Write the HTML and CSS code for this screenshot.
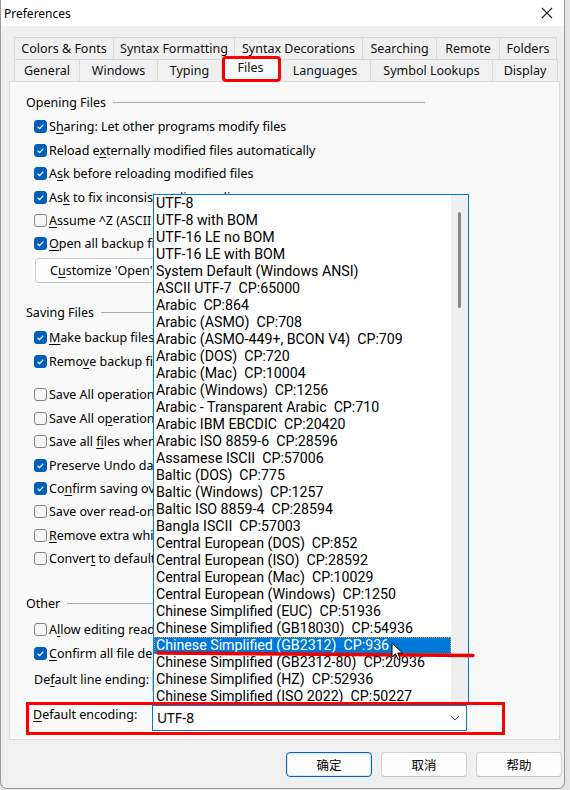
FILE: index.html
```html
<!DOCTYPE html>
<html>
<head>
<meta charset="utf-8">
<title>Preferences</title>
<link rel="stylesheet" href="styles.css">
</head>
<body>
<div class="window">
  <div class="titlebar">
    <span class="title">Preferences</span>
    <svg class="close" width="12" height="12" viewBox="0 0 12 12"><path d="M1 1 L11 11 M11 1 L1 11" stroke="#222" stroke-width="1.1" fill="none"/></svg>
  </div>

  <div class="tabs">
    <div class="tabrow">
      <div class="tab w100">Colors &amp; Fonts</div>
      <div class="tab w121">Syntax Formatting</div>
      <div class="tab w128">Syntax Decorations</div>
      <div class="tab w74">Searching</div>
      <div class="tab w63">Remote</div>
      <div class="tab w57">Folders</div>
    </div>
    <div class="tabrow">
      <div class="tab w65">General</div>
      <div class="tab w78">Windows</div>
      <div class="tab w64">Typing</div>
      <div class="tab w58 active">Files</div>
      <div class="tab w91">Languages</div>
      <div class="tab w122">Symbol Lookups</div>
      <div class="tab w65">Display</div>
    </div>
  </div>

  <div class="panel">
    <div class="group-head"><span>Opening Files</span><span class="rule"></span></div>
    <div class="row"><span class="cb on"><svg viewBox="0 0 13 13"><path d="M3.2 6.8 L5.4 9 L9.8 4.4"/></svg></span><span class="lbl">S<u>h</u>aring: Let other programs modify files</span></div>
    <div class="row"><span class="cb on"><svg viewBox="0 0 13 13"><path d="M3.2 6.8 L5.4 9 L9.8 4.4"/></svg></span><span class="lbl">Reload e<u>x</u>ternally modified files automatically</span></div>
    <div class="row"><span class="cb on"><svg viewBox="0 0 13 13"><path d="M3.2 6.8 L5.4 9 L9.8 4.4"/></svg></span><span class="lbl">A<u>s</u>k before reloading modified files</span></div>
    <div class="row"><span class="cb on"><svg viewBox="0 0 13 13"><path d="M3.2 6.8 L5.4 9 L9.8 4.4"/></svg></span><span class="lbl">As<u>k</u> to fix inconsistent line endings</span></div>
    <div class="row"><span class="cb"></span><span class="lbl"><u>A</u>ssume ^Z (ASCII 26) marks end of file</span></div>
    <div class="row"><span class="cb on"><svg viewBox="0 0 13 13"><path d="M3.2 6.8 L5.4 9 L9.8 4.4"/></svg></span><span class="lbl"><u>O</u>pen all backup files read-only</span></div>
    <div class="btn customize">C<u>u</u>stomize 'Open' dialog...</div>

    <div class="group-head saving"><span>Saving Files</span><span class="rule"></span></div>
    <div class="row"><span class="cb on"><svg viewBox="0 0 13 13"><path d="M3.2 6.8 L5.4 9 L9.8 4.4"/></svg></span><span class="lbl"><u>M</u>ake backup files when saving</span></div>
    <div class="row"><span class="cb on"><svg viewBox="0 0 13 13"><path d="M3.2 6.8 L5.4 9 L9.8 4.4"/></svg></span><span class="lbl">Remo<u>v</u>e backup files on exit</span></div>
    <div class="row gap"><span class="cb"></span><span class="lbl">Save All operation saves new files</span></div>
    <div class="row"><span class="cb"></span><span class="lbl">Save All o<u>p</u>eration saves unchanged files</span></div>
    <div class="row"><span class="cb"></span><span class="lbl">Save all <u>f</u>iles when switching apps</span></div>
    <div class="row"><span class="cb on"><svg viewBox="0 0 13 13"><path d="M3.2 6.8 L5.4 9 L9.8 4.4"/></svg></span><span class="lbl">Preserve Undo data after saving</span></div>
    <div class="row"><span class="cb on"><svg viewBox="0 0 13 13"><path d="M3.2 6.8 L5.4 9 L9.8 4.4"/></svg></span><span class="lbl">Co<u>n</u>firm saving over newer file</span></div>
    <div class="row"><span class="cb"></span><span class="lbl">Save over read-only files</span></div>
    <div class="row"><span class="cb"></span><span class="lbl"><u>R</u>emove extra whitespace</span></div>
    <div class="row"><span class="cb"></span><span class="lbl">Conver<u>t</u> to default line ending</span></div>

    <div class="group-head other"><span>Other</span><span class="rule"></span></div>
    <div class="row"><span class="cb"></span><span class="lbl">A<u>l</u>low editing read-only files</span></div>
    <div class="row"><span class="cb on"><svg viewBox="0 0 13 13"><path d="M3.2 6.8 L5.4 9 L9.8 4.4"/></svg></span><span class="lbl"><u>C</u>onfirm all file deletions</span></div>
    <div class="field line-ending"><span class="flabel">De<u>f</u>ault line ending:</span><div class="combo"></div></div>
    <div class="field encoding"><span class="flabel"><u>D</u>efault encoding:</span><div class="combo focus"><span>UTF-8</span><svg class="chev" width="10" height="6" viewBox="0 0 10 6"><path d="M1 1 L5 5 L9 1" stroke="#555" stroke-width="1" fill="none"/></svg></div></div>
  </div>

  <div class="buttons">
    <div class="btn dlg default">确定</div>
    <div class="btn dlg">取消</div>
    <div class="btn dlg">帮助</div>
  </div>

  <div class="dropdown">
    <div class="list">
      <div class="item">UTF-8</div>
      <div class="item">UTF-8 with BOM</div>
      <div class="item">UTF-16 LE no BOM</div>
      <div class="item">UTF-16 LE with BOM</div>
      <div class="item">System Default (Windows ANSI)</div>
      <div class="item">ASCII UTF-7  CP:65000</div>
      <div class="item">Arabic  CP:864</div>
      <div class="item">Arabic (ASMO)  CP:708</div>
      <div class="item">Arabic (ASMO-449+, BCON V4)  CP:709</div>
      <div class="item">Arabic (DOS)  CP:720</div>
      <div class="item">Arabic (Mac)  CP:10004</div>
      <div class="item">Arabic (Windows)  CP:1256</div>
      <div class="item">Arabic - Transparent Arabic  CP:710</div>
      <div class="item">Arabic IBM EBCDIC  CP:20420</div>
      <div class="item">Arabic ISO 8859-6  CP:28596</div>
      <div class="item">Assamese ISCII  CP:57006</div>
      <div class="item">Baltic (DOS)  CP:775</div>
      <div class="item">Baltic (Windows)  CP:1257</div>
      <div class="item">Baltic ISO 8859-4  CP:28594</div>
      <div class="item">Bangla ISCII  CP:57003</div>
      <div class="item">Central European (DOS)  CP:852</div>
      <div class="item">Central European (ISO)  CP:28592</div>
      <div class="item">Central European (Mac)  CP:10029</div>
      <div class="item">Central European (Windows)  CP:1250</div>
      <div class="item">Chinese Simplified (EUC)  CP:51936</div>
      <div class="item">Chinese Simplified (GB18030)  CP:54936</div>
      <div class="item sel">Chinese Simplified (GB2312)  CP:936</div>
      <div class="item">Chinese Simplified (GB2312-80)  CP:20936</div>
      <div class="item">Chinese Simplified (HZ)  CP:52936</div>
      <div class="item">Chinese Simplified (ISO 2022)  CP:50227</div>
    </div>
    <div class="scrollbar"><div class="thumb"></div></div>
  </div>

  <div class="mark mark-tab"></div>
  <div class="mark mark-enc"></div>
  <svg class="underline" width="330" height="12" viewBox="0 0 330 12"><path d="M2 4 L317 6.5" stroke="#ee0000" stroke-width="3.4" stroke-linecap="round" fill="none"/></svg>
  <svg class="cursor" width="14" height="20" viewBox="0 0 14 20"><path d="M1 1 L1 15 L4.5 11.8 L7 17.5 L9.2 16.5 L6.8 11 L11.5 11 Z" fill="#fff" stroke="#000" stroke-width="1" stroke-linejoin="round"/></svg>
</div>
</body>
</html>
```

FILE: styles.css
```css
* { box-sizing: border-box; }
html, body { margin: 0; padding: 0; }
body {
  width: 570px;
  height: 790px;
  background: #e4e4e4;
  font-family: "Noto Sans", "Noto Sans CJK SC", sans-serif;
  font-size: 12px;
  color: #000;
  overflow: hidden;
}
.window {
  position: relative;
  width: 565px;
  height: 789px;
  background: #f0f0f0;
  border: 1px solid #9a9a9a;
  border-top: none;
  border-radius: 0 0 7px 7px;
  display: flex;
  flex-direction: column;
}
.titlebar {
  height: 26px;
  background: #fff;
  display: flex;
  align-items: center;
  justify-content: space-between;
  padding: 0 11px 0 3px;
}
.title { font-size: 12px; }
.close { display: block; }

.tabs {
  margin: 11px 0 0 13px;
  display: flex;
  flex-direction: column;
}
.tabrow { display: flex; height: 22px; }
.tab {
  height: 22px;
  border: 1px solid #d9d9d9;
  border-bottom: none;
  margin-left: -1px;
  background: #f0f0f0;
  display: flex;
  align-items: center;
  justify-content: center;
  font-size: 12.5px;
  color: #111;
  padding-bottom: 1px;
}
.tabrow .tab:first-child { margin-left: 0; }
.tab.active {
  background: #f9f9f9;
  height: 25px;
  margin-top: -3px;
  position: relative;
  z-index: 2;
  padding-bottom: 4px;
}
.w57 { width: 58px; } .w58 { width: 59px; } .w63 { width: 64px; } .w64 { width: 65px; }
.w65 { width: 66px; } .w74 { width: 75px; } .w78 { width: 79px; } .w91 { width: 92px; }
.w100 { width: 100px; } .w121 { width: 122px; } .w122 { width: 123px; } .w128 { width: 129px; }

.panel {
  margin-left: 8px;
  width: 551px;
  height: 659px;
  background: #f9f9f9;
  border: 1px solid #dcdcdc;
  padding: 12px 0 0 16px;
  display: flex;
  flex-direction: column;
  overflow: hidden;
}
.group-head {
  display: flex;
  align-items: center;
  height: 16px;
  width: 399px;
  margin-bottom: 5.3px;
  font-size: 12.5px;
}
.group-head .rule {
  flex: 1;
  height: 1px;
  background: #a8a8a8;
  margin-left: 7px;
}
.group-head.saving { margin-top: 22px; }
.group-head.other { margin-top: 25.5px; margin-bottom: 6.3px; }
.row {
  height: 23.4px;
  display: flex;
  align-items: center;
  padding-left: 8px;
  white-space: nowrap;
  font-size: 12.5px;
}
.row.gap { margin-top: 10.2px; }
.cb {
  width: 13px;
  height: 13px;
  border: 1px solid #858585;
  border-radius: 3px;
  background: #f6f6f6;
  margin-right: 2px;
  flex: none;
  display: flex;
}
.cb.on {
  background: #005fb8;
  border-color: #005fb8;
}
.cb svg { width: 11px; height: 11px; }
.cb svg path { stroke: #fff; stroke-width: 1.3; fill: none; }
.lbl u, .flabel u, .btn u { text-decoration-thickness: 1px; text-underline-offset: 2px; }

.btn {
  background: #fdfdfd;
  border: 1px solid #d0d0d0;
  border-bottom-color: #c2c2c2;
  border-radius: 4px;
  display: flex;
  align-items: center;
  white-space: nowrap;
}
.customize {
  margin: 2.3px 0 0 9px;
  width: 200px;
  height: 25px;
  padding-left: 14px;
  font-size: 12.5px;
}

.field {
  display: flex;
  align-items: flex-start;
  padding-left: 8px;
  font-size: 12.5px;
}
.field.line-ending { margin-top: 1.9px; height: 26px; }
.field.encoding { margin-top: 12px; height: 26px; }
.flabel { width: 118px; line-height: 18px; padding-top: 4px; }
.field.encoding .flabel { padding-top: 1px; margin-left: -1px; width: 119px; }
.combo {
  width: 315px;
  height: 26px;
  background: #fff;
  border: 1px solid #c8c8c8;
  border-radius: 3px;
  display: flex;
  align-items: center;
  justify-content: space-between;
  padding: 0 6px 0 4px;
}
.combo.focus { border-color: #0078d7; border-radius: 0; font-size: 13.8px; }
.chev { display: block; }

.buttons {
  display: flex;
  justify-content: flex-end;
  gap: 9px;
  margin-top: 12px;
  padding-right: 2px;
}
.dlg {
  width: 86px;
  height: 25px;
  justify-content: center;
  font-family: "Noto Sans CJK SC", sans-serif;
  font-size: 12.5px;
}
.dlg.default { border: 1px solid #0067c0; box-shadow: inset 0 0 0 1px #d6e6f5; }

.dropdown {
  position: absolute;
  left: 152px;
  top: 194px;
  width: 316px;
  height: 511px;
  background: #fff;
  border: 1px solid #0078d7;
  display: flex;
  z-index: 5;
}
.list { flex: 1; overflow: hidden; }
.item {
  height: 17px;
  line-height: 17px;
  padding-left: 2px;
  white-space: pre;
  font-family: Roboto, "Noto Sans", sans-serif;
  font-size: 14.2px;
  color: #000;
}
.item.sel {
  background: #0078d7;
  color: #fff;
  outline: 1px dotted #e8a040;
  outline-offset: -1px;
}
.scrollbar {
  width: 17px;
  background: #efefef;
  position: relative;
}
.thumb {
  position: absolute;
  left: 7px;
  top: 17px;
  width: 3px;
  height: 96px;
  border-radius: 2px;
  background: #8a8a8a;
}

.mark {
  position: absolute;
  border: 3.5px solid #f00;
  z-index: 6;
}
.mark-tab { left: 221px; top: 56px; width: 59px; height: 26px; border-radius: 4px; }
.mark-enc { left: 25px; top: 702px; width: 479px; height: 33px; }
.underline { position: absolute; left: 155px; top: 649px; z-index: 7; }
.cursor { position: absolute; left: 390px; top: 642px; z-index: 8; }
```
